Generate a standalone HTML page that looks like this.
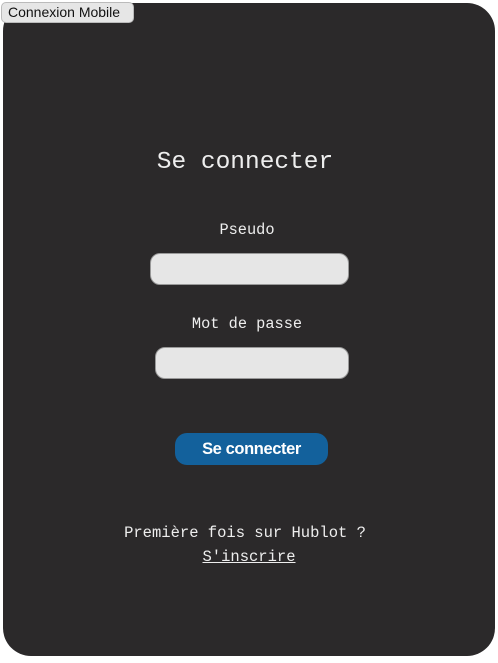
<!DOCTYPE html>
<html><head><meta charset="utf-8"><style>
body{margin:0;width:498px;height:663px;background:#fff;position:relative;overflow:hidden;font-family:"Liberation Mono",monospace}
.card{position:absolute;left:3px;top:3px;width:492px;height:653px;background:#2b292a;border-radius:28px}
.tab{position:absolute;left:1px;top:2px;width:133px;height:21px;background:#e6e6e6;border:1px solid #bbb;border-radius:5px;box-sizing:border-box;font:14px "Liberation Sans",sans-serif;color:#111;line-height:19px;padding-left:6px}
.t{position:absolute;left:-4px;width:498px;text-align:center;color:#eee;white-space:nowrap}
.in{position:absolute;background:#e6e6e6;border:1px solid #999;box-sizing:border-box;border-radius:10px}
.btn{position:absolute;left:175px;top:433px;width:153px;height:32px;background:#13619c;border-radius:12px;color:#fff;font:bold 16.5px "Liberation Sans",sans-serif;text-align:center;line-height:33px;letter-spacing:-0.4px}
</style></head><body>
<div class="card"></div>
<div class="tab">Connexion Mobile</div>
<div class="t" style="top:149px;font-size:24.5px">Se connecter</div>
<div class="t" style="top:221px;font-size:15.3px;left:-2px">Pseudo</div>
<div class="in" style="left:150px;top:253px;width:199px;height:32px"></div>
<div class="t" style="top:315px;font-size:15.3px;left:-2px">Mot de passe</div>
<div class="in" style="left:155px;top:347px;width:194px;height:32px"></div>
<div class="btn">Se connecter</div>
<div class="t" style="top:524px;font-size:15.5px">Première fois sur Hublot ?</div>
<div class="t" style="top:548px;font-size:15.5px;left:0px"><span style="text-decoration:underline">S'inscrire</span></div>
</body></html>
